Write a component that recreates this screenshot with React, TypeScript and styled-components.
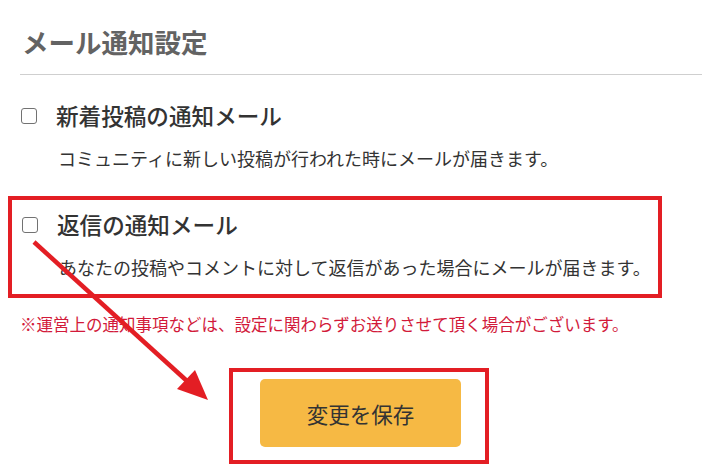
import styled, { createGlobalStyle } from 'styled-components';

const GlobalStyle = createGlobalStyle`
  body {
    margin: 0;
    background: #fff;
    font-family: 'Noto Sans CJK JP', 'Noto Sans', sans-serif;
    color: #333;
  }
`;

const notices = [
  {
    id: 'post',
    title: '新着投稿の通知メール',
    text: 'コミュニティに新しい投稿が行われた時にメールが届きます。',
    marked: false
  },
  {
    id: 'reply',
    title: '返信の通知メール',
    text: 'あなたの投稿やコメントに対して返信があった場合にメールが届きます。',
    marked: true
  }
];

const App = () => {
  return (
    <>
      <GlobalStyle />
      <Page>
        <Heading>メール通知設定</Heading>
        <ItemList>
          {notices.map((n) => (
            <Item key={n.id} $marked={n.marked}>
              <Row>
                <Check type="checkbox" id={n.id} />
                <Title htmlFor={n.id}>{n.title}</Title>
              </Row>
              <Desc>{n.text}</Desc>
            </Item>
          ))}
        </ItemList>
        <Note>※運営上の通知事項などは、設定に関わらずお送りさせて頂く場合がございます。</Note>
        <Actions>
          <Marker>
            <SaveButton type="button">変更を保存</SaveButton>
          </Marker>
        </Actions>
        <Arrow width="718" height="469" viewBox="0 0 718 469">
          <line x1="34" y1="242" x2="187" y2="381" stroke="#e31e24" strokeWidth="4.5" />
          <polygon points="208,400 177,389 195,370" fill="#e31e24" />
        </Arrow>
      </Page>
    </>
  );
};

export default App;

const Page = styled.div`
  position: relative;
  padding: 0 16px 0 20px;
  min-height: 469px;
  box-sizing: border-box;
`;

const Heading = styled.h2`
  margin: 0;
  padding: 22px 0 12px 2px;
  font-size: 26.5px;
  line-height: 40px;
  font-weight: 700;
  color: #636363;
  border-bottom: 1px solid #cfcfcf;
`;

const ItemList = styled.div`
  display: flex;
  flex-direction: column;
  gap: 24px;
  padding-top: 24px;
`;

const Item = styled.div<{ $marked?: boolean }>`
  display: flex;
  flex-direction: column;
  gap: 11px;
  ${({ $marked }) =>
    $marked &&
    `
    margin-left: -12px;
    width: 654px;
    box-sizing: border-box;
    border: 4px solid #e31e24;
    padding: 8px 0 13px 9px;
  `}
`;

const Row = styled.div`
  display: flex;
  align-items: center;
  gap: 19px;
`;

const Check = styled.input`
  appearance: none;
  margin: 0 0 0 1px;
  width: 16px;
  height: 16px;
  border: 1.6px solid #727272;
  border-radius: 3px;
  box-sizing: border-box;
  background: #fff;
  flex: none;
`;

const Title = styled.label`
  font-size: 22.6px;
  line-height: 34px;
  font-weight: 500;
  color: #333;
`;

const Desc = styled.p`
  margin: 0;
  padding-left: 38px;
  font-size: 18px;
  line-height: 28px;
  color: #333;
`;

const Note = styled.p`
  margin: 14px 0 0;
  font-size: 16.5px;
  line-height: 24px;
  color: #d21a3a;
`;

const Actions = styled.div`
  display: flex;
  justify-content: center;
  padding: 32px 4px 0 0;
`;

const Marker = styled.div`
  border: 4px solid #e31e24;
  padding: 7px 24px 13px 27px;
`;

const SaveButton = styled.button`
  display: block;
  width: 201px;
  height: 68px;
  border: none;
  border-radius: 5px;
  background: #f6b944;
  font-family: inherit;
  font-size: 21.5px;
  color: #333;
  cursor: pointer;
`;

const Arrow = styled.svg`
  position: absolute;
  top: 0;
  left: 0;
  pointer-events: none;
`;
